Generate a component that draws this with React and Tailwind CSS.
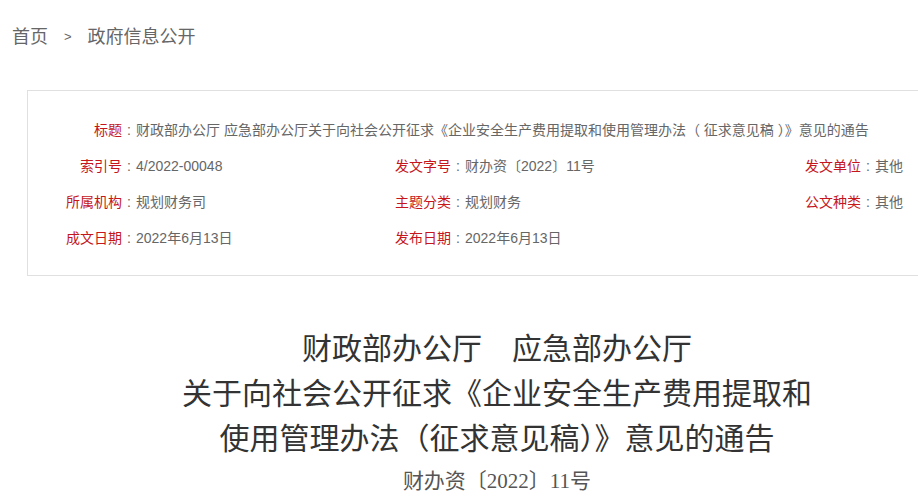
import React from "react";

const sans = { fontFamily: '"Liberation Sans", "Noto Sans CJK SC", sans-serif' };

// 文件信息
const rows = [
  [
    ["索引号", "4/2022-00048"],
    ["发文字号", "财办资〔2022〕11号"],
    ["发文单位", "其他"],
  ],
  [
    ["所属机构", "规划财务司"],
    ["主题分类", "规划财务"],
    ["公文种类", "其他"],
  ],
  [
    ["成文日期", "2022年6月13日"],
    ["发布日期", "2022年6月13日"],
    null,
  ],
];

function Colon() {
  return <span className="inline-block w-[14px] text-center text-[#666]">:</span>;
}

function Cell({ label, value, className }) {
  return (
    <div className={className}>
      <span className="text-[#c4161c]">{label}</span>
      <Colon />
      <span className="text-[#666]">{value}</span>
    </div>
  );
}

function App() {
  return (
    <div className="w-[918px] h-[499px] overflow-hidden bg-white" style={sans}>
      {/* 面包屑 */}
      <div className="flex items-center h-[74px] pl-[12px] text-[18px] text-[#666]">
        <span>首页</span>
        <span className="mx-[16px] text-[13px]">&gt;</span>
        <span>政府信息公开</span>
      </div>

      <div className="ml-[27px] w-[940px]">
        {/* 信息框 */}
        <div className="mt-[16px] border border-[#e0e0e0] pt-[21px] pb-[19px] text-[14px] leading-[36px]">
          <div className="flex">
            <div className="w-[108px] text-right shrink-0">
              <span className="text-[#c4161c]">标题</span>
              <Colon />
            </div>
            <div className="text-[#666] whitespace-nowrap">
              财政部办公厅 应急部办公厅关于向社会公开征求《企业安全生产费用提取和使用管理办法（ 征求意见稿 ）》意见的通告
            </div>
          </div>
          {rows.map((r, i) => (
            <div key={i} className="flex whitespace-nowrap">
              <div className="w-[367px] flex shrink-0">
                <div className="w-[108px] text-right shrink-0">
                  <span className="text-[#c4161c]">{r[0][0]}</span>
                  <Colon />
                </div>
                <span className="text-[#666]">{r[0][1]}</span>
              </div>
              <Cell className="w-[410px] shrink-0" label={r[1][0]} value={r[1][1]} />
              {r[2] && <Cell label={r[2][0]} value={r[2][1]} />}
            </div>
          ))}
        </div>

        {/* 标题 */}
        <div
          className="mt-[50px] text-center text-[#333] text-[30px] leading-[45px]"
          style={{ fontFamily: '"Liberation Serif", "Noto Sans CJK SC", serif' }}
        >
          <div>财政部办公厅　应急部办公厅</div>
          <div>关于向社会公开征求《企业安全生产费用提取和</div>
          <div>使用管理办法（征求意见稿）》意见的通告</div>
          <div className="text-[21px] text-[#555] leading-[40px]">财办资〔2022〕11号</div>
        </div>
      </div>
    </div>
  );
}

export default App;
